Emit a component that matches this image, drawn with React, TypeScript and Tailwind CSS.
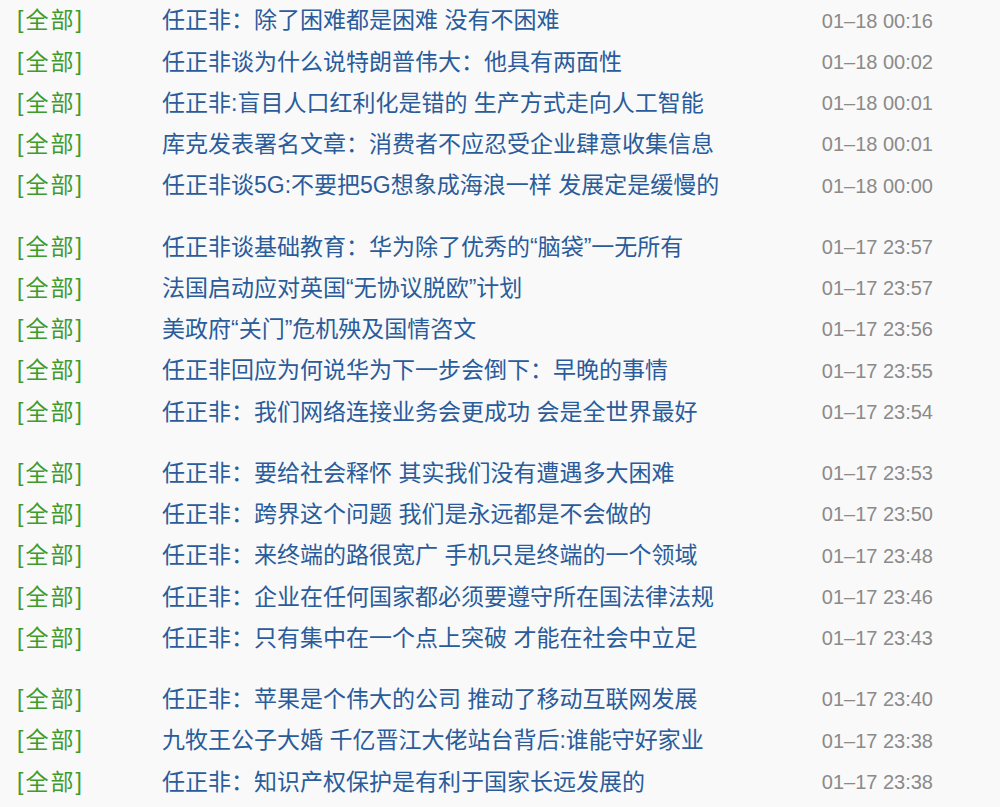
import React from "react"

interface NewsItem {
  title: string
  time: string
}

const groups: NewsItem[][] = [
  [
    { title: "任正非：除了困难都是困难 没有不困难", time: "01–18 00:16" },
    { title: "任正非谈为什么说特朗普伟大：他具有两面性", time: "01–18 00:02" },
    { title: "任正非:盲目人口红利化是错的 生产方式走向人工智能", time: "01–18 00:01" },
    { title: "库克发表署名文章：消费者不应忍受企业肆意收集信息", time: "01–18 00:01" },
    { title: "任正非谈5G:不要把5G想象成海浪一样 发展定是缓慢的", time: "01–18 00:00" },
  ],
  [
    { title: "任正非谈基础教育：华为除了优秀的“脑袋”一无所有", time: "01–17 23:57" },
    { title: "法国启动应对英国“无协议脱欧”计划", time: "01–17 23:57" },
    { title: "美政府“关门”危机殃及国情咨文", time: "01–17 23:56" },
    { title: "任正非回应为何说华为下一步会倒下：早晚的事情", time: "01–17 23:55" },
    { title: "任正非：我们网络连接业务会更成功 会是全世界最好", time: "01–17 23:54" },
  ],
  [
    { title: "任正非：要给社会释怀 其实我们没有遭遇多大困难", time: "01–17 23:53" },
    { title: "任正非：跨界这个问题 我们是永远都是不会做的", time: "01–17 23:50" },
    { title: "任正非：来终端的路很宽广 手机只是终端的一个领域", time: "01–17 23:48" },
    { title: "任正非：企业在任何国家都必须要遵守所在国法律法规", time: "01–17 23:46" },
    { title: "任正非：只有集中在一个点上突破 才能在社会中立足", time: "01–17 23:43" },
  ],
  [
    { title: "任正非：苹果是个伟大的公司 推动了移动互联网发展", time: "01–17 23:40" },
    { title: "九牧王公子大婚 千亿晋江大佬站台背后:谁能守好家业", time: "01–17 23:38" },
    { title: "任正非：知识产权保护是有利于国家长远发展的", time: "01–17 23:38" },
  ],
]

function NewsRow({ item }: { item: NewsItem }) {
  return (
    <li className="flex h-[41.25px] items-center">
      <span className="w-[162px] shrink-0 pl-[17px] text-[23px] tracking-[2px] text-[#3f9b2c]">
        [全部]
      </span>
      <a href="#" className="flex-1 truncate text-[23px] text-[#2a5c9b]">
        {item.title}
      </a>
      <span className="w-[180px] shrink-0 pr-[67px] text-right text-[20px] text-[#8a8a8a]">
        {item.time}
      </span>
    </li>
  )
}

export default function App() {
  return (
    <div
      className="min-h-[807px] w-full overflow-hidden bg-[#f9f9f9]"
      style={{ fontFamily: '"Liberation Sans", "Noto Sans CJK SC", sans-serif' }}
    >
      {groups.map((group, i) => (
        <ul key={i} className="mb-[20px]">
          {group.map((item) => (
            <NewsRow key={item.title} item={item} />
          ))}
        </ul>
      ))}
    </div>
  )
}
